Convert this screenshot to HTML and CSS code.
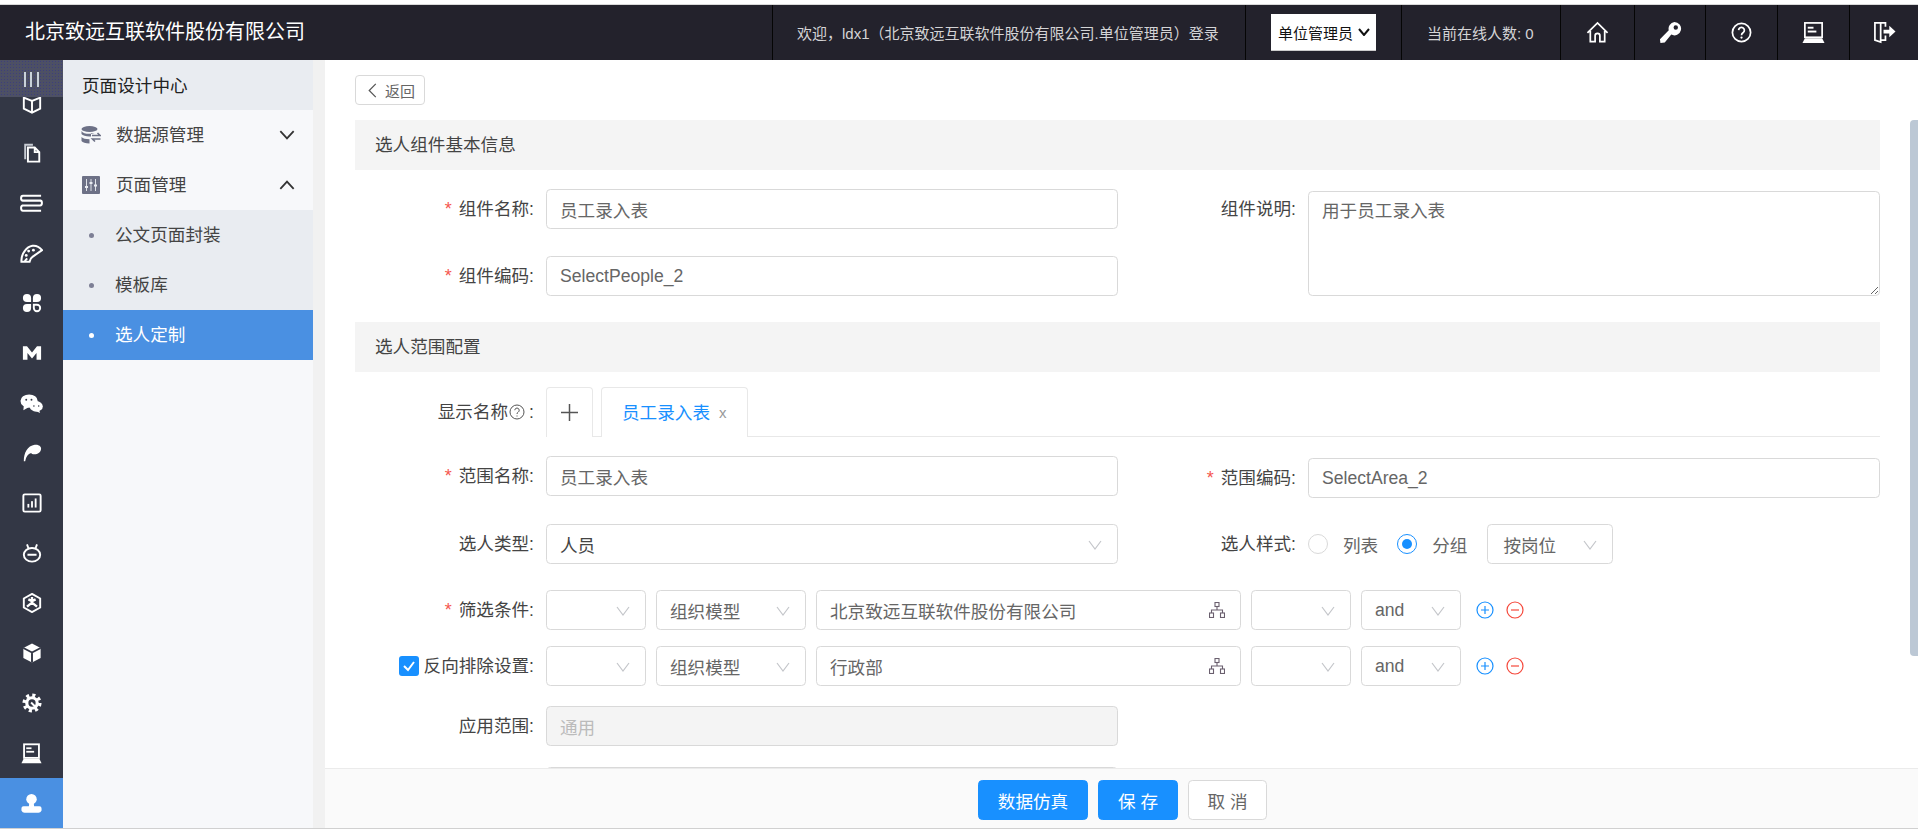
FILE: index.html
```html
<!DOCTYPE html>
<html lang="zh-CN">
<head>
<meta charset="utf-8">
<title>选人定制</title>
<link rel="stylesheet" href="styles.css">
</head>
<body>
<div class="top-strip"></div>
<header class="topbar">
  <div class="brand">北京致远互联软件股份有限公司</div>
  <div class="top-cells">
    <div class="cell cell-welcome">欢迎，ldx1（北京致远互联软件股份有限公司.单位管理员）登录</div>
    <div class="cell cell-role"><div class="role">单位管理员<svg class="role-chev" viewBox="0 0 12 8"><polyline points="1,1 6,7 11,1"/></svg></div></div>
    <div class="cell cell-online">当前在线人数: 0</div>
    <div class="cell cell-icon c1"><svg class="top-icon" viewBox="0 0 24 24"><path class="ln" d="M1.5 12.5 12 2l10.500 10.500M4.500 10.500V21.500H9.500V15.500a2.500 2.500 0 0 1 5 0V21.500H19.500V10.500"/></svg></div>
    <div class="cell cell-icon c2"><svg class="top-icon" viewBox="0 0 24 24"><path class="fl" fill-rule="evenodd" d="M16 1a7 7 0 1 1-3.200 13.200L6 22.500 1.500 23 1 19l9.200-9.300A7 7 0 0 1 16 1zm1.500 3.500a2.300 2.300 0 1 0 0 4.600 2.300 2.300 0 0 0 0-4.600z"/></svg></div>
    <div class="cell cell-icon c3"><svg class="top-icon" viewBox="0 0 24 24"><circle class="ln" cx="12" cy="12" r="9.500"/><path class="ln" d="M9 9.500a3 3 0 1 1 4.800 2.500c-1.200.8-1.800 1.400-1.800 2.800"/><circle class="fl" cx="12" cy="17.300" r="1.200"/></svg></div>
    <div class="cell cell-icon c4"><svg class="top-icon" viewBox="0 0 24 24"><rect class="ln" x="3" y="2" width="18" height="15"/><rect class="fl" x="6" y="6" width="6" height="2"/><rect class="fl" x="6" y="10" width="9" height="2"/><path class="fl" d="M3 18H21L23.500 23H.5Z"/></svg></div>
    <div class="cell cell-icon c5"><svg class="top-icon" viewBox="0 0 24 24"><path class="ln" d="M13 6V2H2V20L8 22V2M8 20H13V15"/><path class="fl" d="M11 9H17V5L23.500 11 17 17V13H11Z"/></svg></div>
  </div>
</header>

<div class="body-row">
  <nav class="rail">
    <div class="rail-toggle"><svg class="toggle-icon" viewBox="0 0 16 15"><rect x="0" width="2" height="15"/><rect x="6" width="2" height="15"/><rect x="13" width="2" height="15"/></svg></div>
    <div class="rail-item book"><svg class="rail-icon" viewBox="0 0 22 22"><path class="ln" d="M2 3 11 6.500 20 3V15L11 19.500 2 15ZM11 6.500V19.500"/></svg></div>
    <div class="rail-item"><svg class="rail-icon" viewBox="0 0 22 22"><path class="ln dim" d="M3.500 18V2H12"/><path class="ln" d="M6.500 5H14L19 10V20.500H6.500ZM14 5V10H19"/></svg></div>
    <div class="rail-item"><svg class="rail-icon wide" viewBox="0 0 24 21"><path class="ln" d="M3 2.500H22M22 7.500H3C.5 7.500.5 2.500 3 2.500M2 7.500H21C23.500 7.500 23.500 12.500 21 12.500H2M3 12.500H22M22 18H3C.5 18 .5 12.500 3 12.500"/></svg></div>
    <div class="rail-item"><svg class="rail-icon wide" viewBox="0 0 24 20"><path class="ln" d="M3 18.500H1.500C1 10 7 3 13 2c4-.5 7.500 1.500 10 4.500L13 13.500c-1.500 1-2.500 3-3 5Z"/><circle class="fl" cx="6.500" cy="12" r="1.500"/><circle class="fl" cx="9" cy="7.500" r="1.500"/><circle class="fl" cx="14" cy="6.500" r="1.500"/><path class="ln" d="M5 18 7.500 15"/></svg></div>
    <div class="rail-item"><svg class="rail-icon" viewBox="0 0 22 22"><path class="fl" d="M10 10H5.500a4.500 4.500 0 1 1 4.500-4.500ZM12 10V5.500a4.500 4.500 0 1 1 4.500 4.500ZM10 12V16.500a4.500 4.500 0 1 1-4.500-4.500Z"/><path class="ln" d="M13 13H16.500a3.500 3.500 0 1 1-3.500 3.500Z"/></svg></div>
    <div class="rail-item"><svg class="rail-icon" viewBox="0 0 22 22"><path class="fl" d="M1 3.500H5.500L11 10.500 16.500 3.500H21V18.500H16V11L11 17 6 11V18.500H1Z"/></svg></div>
    <div class="rail-item"><svg class="rail-icon wide" viewBox="0 0 24 20"><ellipse class="fl" cx="9.500" cy="7.500" rx="9" ry="7"/><path class="fl" d="M4 12 3.500 17 9 14Z"/><ellipse class="fl" cx="17" cy="13" rx="6.800" ry="5.500"/><path class="fl" d="M20 17 21 20 17 18Z"/><circle class="cut" cx="6.500" cy="6" r="1"/><circle class="cut" cx="12" cy="6" r="1"/><circle class="cut" cx="14.500" cy="12.500" r=".8"/><circle class="cut" cx="19.500" cy="12.500" r=".8"/></svg></div>
    <div class="rail-item"><svg class="rail-icon" viewBox="0 0 22 22"><path class="fl" d="M2 20C2 11 6 3 14 2c4-.5 7 1.500 7 4 0 4-3.500 6.500-7.500 6.500-2 0-3-.8-3.500-1.500-3.500 1-5.500 4-6.500 9Z"/></svg></div>
    <div class="rail-item"><svg class="rail-icon" viewBox="0 0 22 22"><rect class="ln" x="1.500" y="1.500" width="19" height="19" rx="1.500"/><rect class="fl" x="6" y="12" width="2" height="4"/><rect class="fl" x="10" y="9" width="2" height="7"/><rect class="fl" x="14" y="6" width="2" height="10"/></svg></div>
    <div class="rail-item"><svg class="rail-icon" viewBox="0 0 22 22"><ellipse class="ln" cx="11" cy="13" rx="9" ry="7.500"/><path class="ln" d="M7 5.500 5.500 1.500M15 5.500 16.500 1.500M6 13H16"/></svg></div>
    <div class="rail-item"><svg class="rail-icon" viewBox="0 0 22 22"><path class="ln" d="M11 1 20 6V16L11 21 2 16V6Z"/><path class="ln thick" d="M11 4.500V10.500M11 10.500 5.500 15M11 10.500 16.500 15M7 7 11 9 15 7"/></svg></div>
    <div class="rail-item"><svg class="rail-icon" viewBox="0 0 22 22"><path class="fl" d="M11 .5 20.500 5.500V16.500L11 21.500 1.500 16.500V5.500Z"/><path class="ln cutln" d="M1.500 5.500 11 10.500 20.500 5.500M11 10.500V21.500"/></svg></div>
    <div class="rail-item"><svg class="rail-icon" viewBox="0 0 22 22"><circle class="gear" cx="11" cy="11" r="8.500"/><circle class="fl" cx="11" cy="11" r="7.500"/><circle class="cut" cx="11" cy="11" r="4"/><path class="ln" d="M10 10.500 16 16.500"/></svg></div>
    <div class="rail-item"><svg class="rail-icon wide" viewBox="0 0 24 24"><rect class="ln" x="3.500" y="1.500" width="17" height="15.500"/><rect class="fl" x="6" y="5" width="6" height="2"/><rect class="fl" x="6" y="9" width="9" height="2"/><path class="fl" d="M3 18H21L23.500 23H.5Z"/></svg></div>
    <div class="rail-item rail-active"><svg class="rail-icon wide" viewBox="0 0 24 24"><circle class="fl" cx="12" cy="7" r="6"/><path class="fl" d="M9.500 11H14.500L15 15H21c2 0 2.500 1.500 2.500 3v2c-1 2-2 2.500-3.500 2.500H4c-1.500 0-2.500-.5-3.500-2.500v-2c0-1.500.5-3 2.500-3H9Z"/></svg></div>
  </nav>

  <aside class="side">
    <div class="side-head">页面设计中心</div>
    <div class="side-item">
      <svg class="side-icon" viewBox="0 0 20 18"><ellipse class="s-fl" cx="8.500" cy="3" rx="8" ry="3"/><path class="s-fl" d="M.5 5c1 2 4 2.800 8 2.800 2 0 4-.3 5-.8H10V10.500H8.500C5 10.500 1.500 9.500.5 8ZM.5 11c1.500 1.500 4 2.200 8 2.200V17.500c-4 0-7-1-8-2.500Z"/><path class="s-ln" d="M11 9.500H19L16.500 7M19.500 13H11.500L14 15.500"/></svg>
      <span class="side-text">数据源管理</span>
      <svg class="side-chev" viewBox="0 0 14 9"><polyline points="1,1 7,7.500 13,1"/></svg>
    </div>
    <div class="side-item">
      <svg class="side-icon" viewBox="0 0 18 18"><rect class="s-fl" width="18" height="18" rx="1"/><path class="s-cut" d="M4.500 3V15M9 3V15M13.500 3V15"/><rect class="s-knob" x="3" y="10" width="3" height="2"/><rect class="s-knob" x="7.500" y="6" width="3" height="2"/><rect class="s-knob" x="12" y="8.500" width="3" height="2"/></svg>
      <span class="side-text">页面管理</span>
      <svg class="side-chev" viewBox="0 0 14 9"><polyline points="1,8 7,1.500 13,8"/></svg>
    </div>
    <div class="side-sub"><i class="dot"></i><span class="sub-text">公文页面封装</span></div>
    <div class="side-sub"><i class="dot"></i><span class="sub-text">模板库</span></div>
    <div class="side-sub side-sub-on"><i class="dot"></i><span class="sub-text">选人定制</span></div>
  </aside>

  <div class="gutter"></div>

  <main class="main">
    <div class="scroll">
      <button class="back" type="button"><svg class="back-chev" viewBox="0 0 9 16"><polyline points="8,1 1,8 8,15"/></svg>返回</button>

      <h2 class="section sec-first">选人组件基本信息</h2>

      <div class="pair basic">
        <div class="col">
          <div class="field">
            <label class="lab"><em class="req">*</em>组件名称:</label>
            <input class="ctl" value="员工录入表">
          </div>
          <div class="field mt27">
            <label class="lab"><em class="req">*</em>组件编码:</label>
            <input class="ctl" value="SelectPeople_2">
          </div>
        </div>
        <div class="col col-r">
          <div class="field field-top">
            <label class="lab">组件说明:</label>
            <textarea class="ctl area">用于员工录入表</textarea>
          </div>
        </div>
      </div>

      <h2 class="section sec-second">选人范围配置</h2>

      <div class="field tabs-row">
        <label class="lab lab-help">显示名称<svg class="q" viewBox="0 0 16 16"><circle cx="8" cy="8" r="7"/><path d="M5.800 6.200a2.200 2.200 0 1 1 3.400 1.900c-.8.500-1.200.9-1.200 1.900"/><path d="M8 11.500V12.500"/></svg>:</label>
        <div class="tabs">
          <div class="tab tab-add"><svg class="plus" viewBox="0 0 16 16"><path d="M8 0V16M0 8H16"/></svg></div>
          <div class="tab tab-on"><span class="tab-text">员工录入表</span><span class="tab-x">x</span></div>
        </div>
      </div>

      <div class="pair mt19">
        <div class="col">
          <div class="field">
            <label class="lab"><em class="req">*</em>范围名称:</label>
            <input class="ctl" value="员工录入表">
          </div>
        </div>
        <div class="col col-r nudge">
          <div class="field">
            <label class="lab"><em class="req">*</em>范围编码:</label>
            <input class="ctl" value="SelectArea_2">
          </div>
        </div>
      </div>

      <div class="pair mt26">
        <div class="col">
          <div class="field">
            <label class="lab">选人类型:</label>
            <div class="ctl sel dark">人员<svg class="chev" viewBox="0 0 14 10"><polyline points="1,1 7,9 13,1"/></svg></div>
          </div>
        </div>
        <div class="col col-r">
          <div class="field">
            <label class="lab">选人样式:</label>
            <div class="radios">
              <span class="radio"></span><span class="radio-text">列表</span>
              <span class="radio radio-on"></span><span class="radio-text">分组</span>
              <div class="ctl sel w-post">按岗位<svg class="chev" viewBox="0 0 14 10"><polyline points="1,1 7,9 13,1"/></svg></div>
            </div>
          </div>
        </div>
      </div>

      <div class="field cond mt26">
        <label class="lab"><em class="req">*</em>筛选条件:</label>
        <div class="ctl sel w100"><svg class="chev" viewBox="0 0 14 10"><polyline points="1,1 7,9 13,1"/></svg></div>
        <div class="ctl sel w150">组织模型<svg class="chev" viewBox="0 0 14 10"><polyline points="1,1 7,9 13,1"/></svg></div>
        <div class="ctl sel w425">北京致远互联软件股份有限公司<svg class="tree" viewBox="0 0 16 16"><rect x="6" y=".5" width="4" height="4"/><rect x=".5" y="11" width="4" height="4.500"/><rect x="11.500" y="11" width="4" height="4.500"/><path d="M8 4.500V8M2.500 11V8H13.500V11"/></svg></div>
        <div class="ctl sel w100"><svg class="chev" viewBox="0 0 14 10"><polyline points="1,1 7,9 13,1"/></svg></div>
        <div class="ctl sel w100">and<svg class="chev" viewBox="0 0 14 10"><polyline points="1,1 7,9 13,1"/></svg></div>
        <div class="ops">
          <svg class="op op-add" viewBox="0 0 18 18"><circle cx="9" cy="9" r="8"/><path d="M5 9H13M9 5V13"/></svg>
          <svg class="op op-del" viewBox="0 0 18 18"><circle cx="9" cy="9" r="8"/><path d="M5 9H13"/></svg>
        </div>
      </div>

      <div class="field cond mt16">
        <label class="lab"><span class="check"><svg viewBox="0 0 20 20"><polyline points="5,10 9,14 15,6"/></svg></span>反向排除设置:</label>
        <div class="ctl sel w100"><svg class="chev" viewBox="0 0 14 10"><polyline points="1,1 7,9 13,1"/></svg></div>
        <div class="ctl sel w150">组织模型<svg class="chev" viewBox="0 0 14 10"><polyline points="1,1 7,9 13,1"/></svg></div>
        <div class="ctl sel w425">行政部<svg class="tree" viewBox="0 0 16 16"><rect x="6" y=".5" width="4" height="4"/><rect x=".5" y="11" width="4" height="4.500"/><rect x="11.500" y="11" width="4" height="4.500"/><path d="M8 4.500V8M2.500 11V8H13.500V11"/></svg></div>
        <div class="ctl sel w100"><svg class="chev" viewBox="0 0 14 10"><polyline points="1,1 7,9 13,1"/></svg></div>
        <div class="ctl sel w100">and<svg class="chev" viewBox="0 0 14 10"><polyline points="1,1 7,9 13,1"/></svg></div>
        <div class="ops">
          <svg class="op op-add" viewBox="0 0 18 18"><circle cx="9" cy="9" r="8"/><path d="M5 9H13M9 5V13"/></svg>
          <svg class="op op-del" viewBox="0 0 18 18"><circle cx="9" cy="9" r="8"/><path d="M5 9H13"/></svg>
        </div>
      </div>

      <div class="field mt20">
        <label class="lab">应用范围:</label>
        <input class="ctl off" value="通用" disabled>
      </div>

      <div class="field mt21">
        <label class="lab"></label>
        <input class="ctl">
      </div>
      <div class="thumb"></div>
    </div>
    <footer class="foot">
      <button class="btn btn-pri w110" type="button">数据仿真</button>
      <button class="btn btn-pri w80" type="button">保 存</button>
      <button class="btn w79" type="button">取 消</button>
    </footer>
  </main>
</div>
<div class="bottom-line"></div>
</body>
</html>
```

FILE: styles.css
```css
* { box-sizing: border-box; }
html, body { margin: 0; padding: 0; height: 830px; overflow: hidden; background: #fff; }
body {
  display: flex; flex-direction: column;
  font-family: "Liberation Sans", "Noto Sans CJK SC", sans-serif;
  font-size: 17.6px; color: #333;
}
.top-strip { height: 5px; background: #fff; border-bottom: 1px solid #d9d9d9; flex: none; }
.topbar { height: 55px; flex: none; background: #23222c; display: flex; align-items: stretch; color: #fff; }
.brand { font-size: 20px; line-height: 55px; padding-left: 25px; white-space: nowrap; }
.top-cells { margin-left: auto; display: flex; align-items: stretch; color: #d4d4d6; font-size: 15px; }
.cell { border-left: 1px solid #050505; display: flex; align-items: center; white-space: nowrap; }
.cell-welcome { width: 473px; padding-left: 24px; }
.cell-role { width: 156px; padding-left: 25px; }
.role { width: 105px; height: 37px; background: #fff; color: #111; display: flex; align-items: center; padding-left: 7px; border-bottom: 1px solid #ccc; }
.role-chev { width: 12px; height: 8px; margin-left: 5px; fill: none; stroke: #111; stroke-width: 2; }
.cell-online { width: 159px; padding-left: 25px; }
.cell-icon { justify-content: center; }
.c1 { width: 74px; } .c2 { width: 71px; } .c3 { width: 72px; } .c4 { width: 72px; } .c5 { width: 69px; }
.top-icon { width: 23px; height: 23px; }
.ln { fill: none; stroke: #fff; stroke-width: 1.8; }
.fl { fill: #fff; }
.dim { stroke: #c8ccd4; }
.cut { fill: #333745; }
.cutln { stroke: #333745; }
.gear { fill: none; stroke: #fff; stroke-width: 4; stroke-dasharray: 3.340 3.340; }

.body-row { flex: 1; display: flex; min-height: 0; }
.rail { position: relative; width: 63px; flex: none; background: #333745; padding-top: 18px; overflow: hidden; }
.rail .ln { stroke-width: 2.1; }
.rail .thick { stroke-width: 2.6; }
.rail-toggle { position: absolute; left: 0; top: 0; width: 63px; height: 37px; z-index: 1;
  background-color: #4d5064;
  background-image: radial-gradient(circle, #3d3f7c 0.8px, transparent 1px);
  background-size: 3px 3px;
  display: flex; justify-content: center; padding-top: 12px;
}
.toggle-icon { width: 16px; height: 15px; fill: #c9d2da; }
.rail-item { height: 50px; display: flex; align-items: center; justify-content: center; }
.rail-icon { width: 20px; height: 20px; }
.rail-icon.wide { width: 23px; height: 21px; }
.book { padding-top: 4px; }
.rail-active { background: #4a90e2; }

.side { width: 250px; flex: none; background: #f7f8fa; }
.side-head { height: 50px; background: #e9ecf1; line-height: 52px; padding-left: 19px; color: #222; }
.side-item { height: 50px; display: flex; align-items: center; padding-left: 18px; position: relative; }
.side-icon { width: 20px; height: 18px; flex: none; }
.s-fl { fill: #6d7186; }
.s-ln { fill: none; stroke: #6d7186; stroke-width: 1.600; }
.s-cut { stroke: #dfe2e8; stroke-width: 1; fill: none; }
.s-knob { fill: #e9ecf1; }
.side-text { margin-left: 15px; margin-bottom: 3px; color: #444; }
.side-chev { width: 16px; height: 10px; margin-left: auto; margin-right: 18px; fill: none; stroke: #333; stroke-width: 1.600; }
.side-sub { height: 50px; background: #e9ecf1; display: flex; align-items: center; padding-left: 26px; color: #444; }
.sub-text { margin-bottom: 3px; }
.dot { width: 5px; height: 5px; border-radius: 50%; background: #7d7f95; margin-right: 21px; }
.side-sub-on { background: #4a90e2; color: #fff; }
.side-sub-on .dot { background: #fff; }

.gutter { width: 12px; flex: none; background: #f1f1f1; }

.main { flex: 1; min-width: 0; display: flex; flex-direction: column; }
.scroll { flex: 1; min-height: 0; overflow: hidden; padding: 15px 38px 0 30px; position: relative; }
.back { display: flex; align-items: center; width: 70px; height: 30px; padding: 0 0 0 12px; background: #fff; border: 1px solid #d9d9d9; border-radius: 4px; font: inherit; font-size: 15px; color: #666; }
.back-chev { width: 9px; height: 15px; fill: none; stroke: #555; stroke-width: 1.300; margin-right: 8px; }
.section { margin: 0; height: 50px; background: #f4f4f4; font: inherit; line-height: 50px; padding-left: 20px; color: #444; }
.sec-first { margin-top: 15px; }
.sec-second { margin-top: 26px; }

.pair { display: flex; }
.basic { margin-top: 19px; height: 107px; }
.col { width: 763px; flex: none; }
.col-r { width: 762px; }
.basic .col-r { padding-top: 2px; }
.nudge { padding-top: 2px; }
.field { display: flex; align-items: center; }
.field-top { align-items: flex-start; }
.lab { flex: none; width: 191px; padding-right: 12px; text-align: right; white-space: nowrap; line-height: 40px; color: #444; display: flex; justify-content: flex-end; align-items: center; }
.col-r .lab { width: 190px; }
.field-top .lab { line-height: 36px; }
.req { font-style: normal; color: #f5574f; margin-right: 7px; font-size: 18px; }
.ctl { display: flex; align-items: center; height: 40px; width: 572px; padding: 0 13px; border: 1px solid #d9d9d9; border-radius: 4.400px; background: #fff; font: inherit; color: #666; position: relative; white-space: nowrap; flex: none; }
.area { display: block; height: 105px; padding: 6px 13px; line-height: 26px; resize: both; outline: 0; }
.off { background: #f4f4f4; color: #bbb; -webkit-text-fill-color: #bbb; opacity: 1; }
.sel.dark { color: #444; }
.chev { position: absolute; right: 15px; top: 15px; width: 14px; height: 10px; fill: none; stroke: #c4c6ca; stroke-width: 1.200; }
.tree { position: absolute; right: 15px; top: 11px; width: 16px; height: 16px; fill: none; stroke: #6a5f6e; stroke-width: 1.100; }
.w100 { width: 100px; } .w150 { width: 150px; } .w425 { width: 425px; }
.w-post { width: 126px; margin-left: 20px; padding-left: 15px; }

.tabs-row { margin-top: 15px; align-items: flex-start; height: 50px; }
.tabs-row .lab { height: 50px; }
.q { width: 16px; height: 16px; margin: 0 4px 0 1px; fill: none; stroke: #555; stroke-width: 1; }
.tabs { flex: 1; height: 50px; display: flex; align-items: stretch; gap: 8px; border-bottom: 1px solid #e8e8e8; }
.tab { height: 50px; border: 1px solid #e8e8e8; border-bottom: 0; border-radius: 4px 4px 0 0; display: flex; align-items: center; background: #fff; }
.tab-add { width: 47px; justify-content: center; }
.plus { width: 17px; height: 17px; fill: none; stroke: #555; stroke-width: 1.400; }
.tab-on { width: 147px; padding-left: 20px; color: #1890ff; }
.tab-text { margin-bottom: 3px; }
.tab-x { color: #999; margin-left: 9px; font-size: 15px; margin-bottom: 1px; }
.mt19 { margin-top: 19px; }
.mt26 { margin-top: 26px; }
.mt27 { margin-top: 27px; }
.mt16 { margin-top: 16px; }
.mt20 { margin-top: 20px; }
.mt21 { margin-top: 21px; }

.radios { display: flex; align-items: center; }
.radio { width: 20px; height: 20px; border: 1px solid #d9d9d9; border-radius: 50%; background: #fff; flex: none; position: relative; }
.radio-on { border-color: #1890ff; margin-left: 19px; }
.radio-on::after { content: ""; position: absolute; left: 4px; top: 4px; width: 10px; height: 10px; border-radius: 50%; background: #1890ff; }
.radio-text { margin-left: 15px; color: #666; }

.cond { gap: 10px; }
.cond .lab { margin-right: -10px; }
.ops { display: flex; gap: 12px; margin-left: 5px; }
.op { width: 18px; height: 18px; fill: none; stroke-width: 1.200; }
.op-add { stroke: #1890ff; }
.op-del { stroke: #f5483b; }
.check { width: 20px; height: 20px; background: #1890ff; border-radius: 3px; margin-right: 5px; display: flex; flex: none; }
.check svg { width: 20px; height: 20px; fill: none; stroke: #fff; stroke-width: 2; }

.thumb { position: absolute; right: 0; top: 60px; width: 8px; height: 536px; background: #bcc8d5; border-radius: 4px 0 0 4px; }

.foot { height: 60px; flex: none; background: #fafafa; border-top: 1px solid #ebebeb; display: flex; justify-content: center; align-items: center; gap: 10px; padding: 3px 0 0 2px; position: relative; z-index: 1; }
.btn { height: 40px; border-radius: 4.400px; border: 1px solid #d9d9d9; background: #fff; font: inherit; color: #666; padding: 0; }
.btn-pri { background: #1890ff; border-color: #1890ff; color: #fff; }
.w110 { width: 110px; } .w80 { width: 80px; } .w79 { width: 79px; }
.bottom-line { height: 2px; flex: none; border-top: 1px solid #d0d0d0; background: #fff; }
```
